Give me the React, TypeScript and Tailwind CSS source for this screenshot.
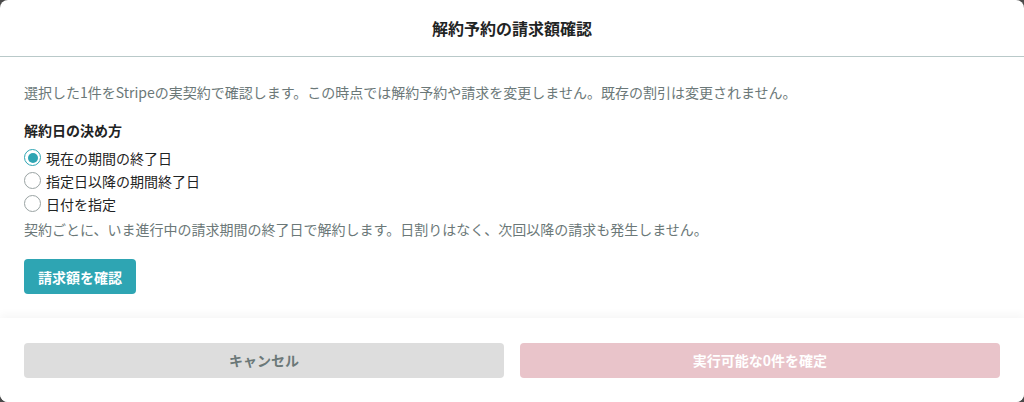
import { useState } from "react";

const OPTIONS = [
  { id: "period_end", label: "現在の期間の終了日" },
  { id: "after_date", label: "指定日以降の期間終了日" },
  { id: "date", label: "日付を指定" },
];

function Radio({ checked }: { checked: boolean }) {
  return (
    <span
      className={
        "flex h-[17px] w-[17px] shrink-0 items-center justify-center rounded-full border bg-white " +
        (checked ? "border-[#2ea5b3]" : "border-[#9aa3a3]")
      }
    >
      {checked && <span className="h-[10px] w-[10px] rounded-full bg-[#2ea5b3]" />}
    </span>
  );
}

export default function App() {
  const [mode, setMode] = useState("period_end");

  return (
    <div
      className="h-[402px] w-[1024px] bg-[#4a4a4a]"
      style={{ fontFamily: '"Noto Sans CJK JP", "Noto Sans", sans-serif' }}
    >
      <div className="flex h-full flex-col overflow-hidden rounded-lg bg-white">
        <div className="flex h-[57px] shrink-0 items-center justify-center border-b border-[#b9c9c9]">
          <h2 className="text-base font-bold text-[#1f2424]">解約予約の請求額確認</h2>
        </div>

        <div className="flex-1 px-6 pt-[23px]">
          <p className="text-sm leading-6 text-[#6b7878]">
            選択した1件をStripeの実契約で確認します。この時点では解約予約や請求を変更しません。既存の割引は変更されません。
          </p>

          <p className="mt-[14px] text-sm font-bold leading-6 text-[#1f2424]">解約日の決め方</p>

          <div className="mt-1 flex flex-col">
            {OPTIONS.map((o) => (
              <label
                key={o.id}
                onClick={() => setMode(o.id)}
                className="flex h-[23px] cursor-pointer items-center gap-[5px] text-sm text-[#1f2424]"
              >
                <Radio checked={mode === o.id} />
                <span>{o.label}</span>
              </label>
            ))}
          </div>

          <p className="mt-0.5 text-sm leading-6 text-[#6b7878]">
            契約ごとに、いま進行中の請求期間の終了日で解約します。日割りはなく、次回以降の請求も発生しません。
          </p>

          <button className="mt-[18px] h-[35px] rounded bg-[#2ea5b3] px-3.5 text-sm font-bold text-white">
            請求額を確認
          </button>
        </div>

        <div className="flex h-[84px] shrink-0 items-center gap-4 bg-white px-6 shadow-[0_-4px_8px_rgba(0,0,0,0.035)]">
          <button className="h-[35px] flex-1 rounded bg-[#dddddd] text-sm font-bold text-[#6b7878]">
            キャンセル
          </button>
          <button
            disabled
            className="h-[35px] flex-1 rounded bg-[#e9c4ca] text-sm font-bold text-white"
          >
            実行可能な0件を確定
          </button>
        </div>
      </div>
    </div>
  );
}
